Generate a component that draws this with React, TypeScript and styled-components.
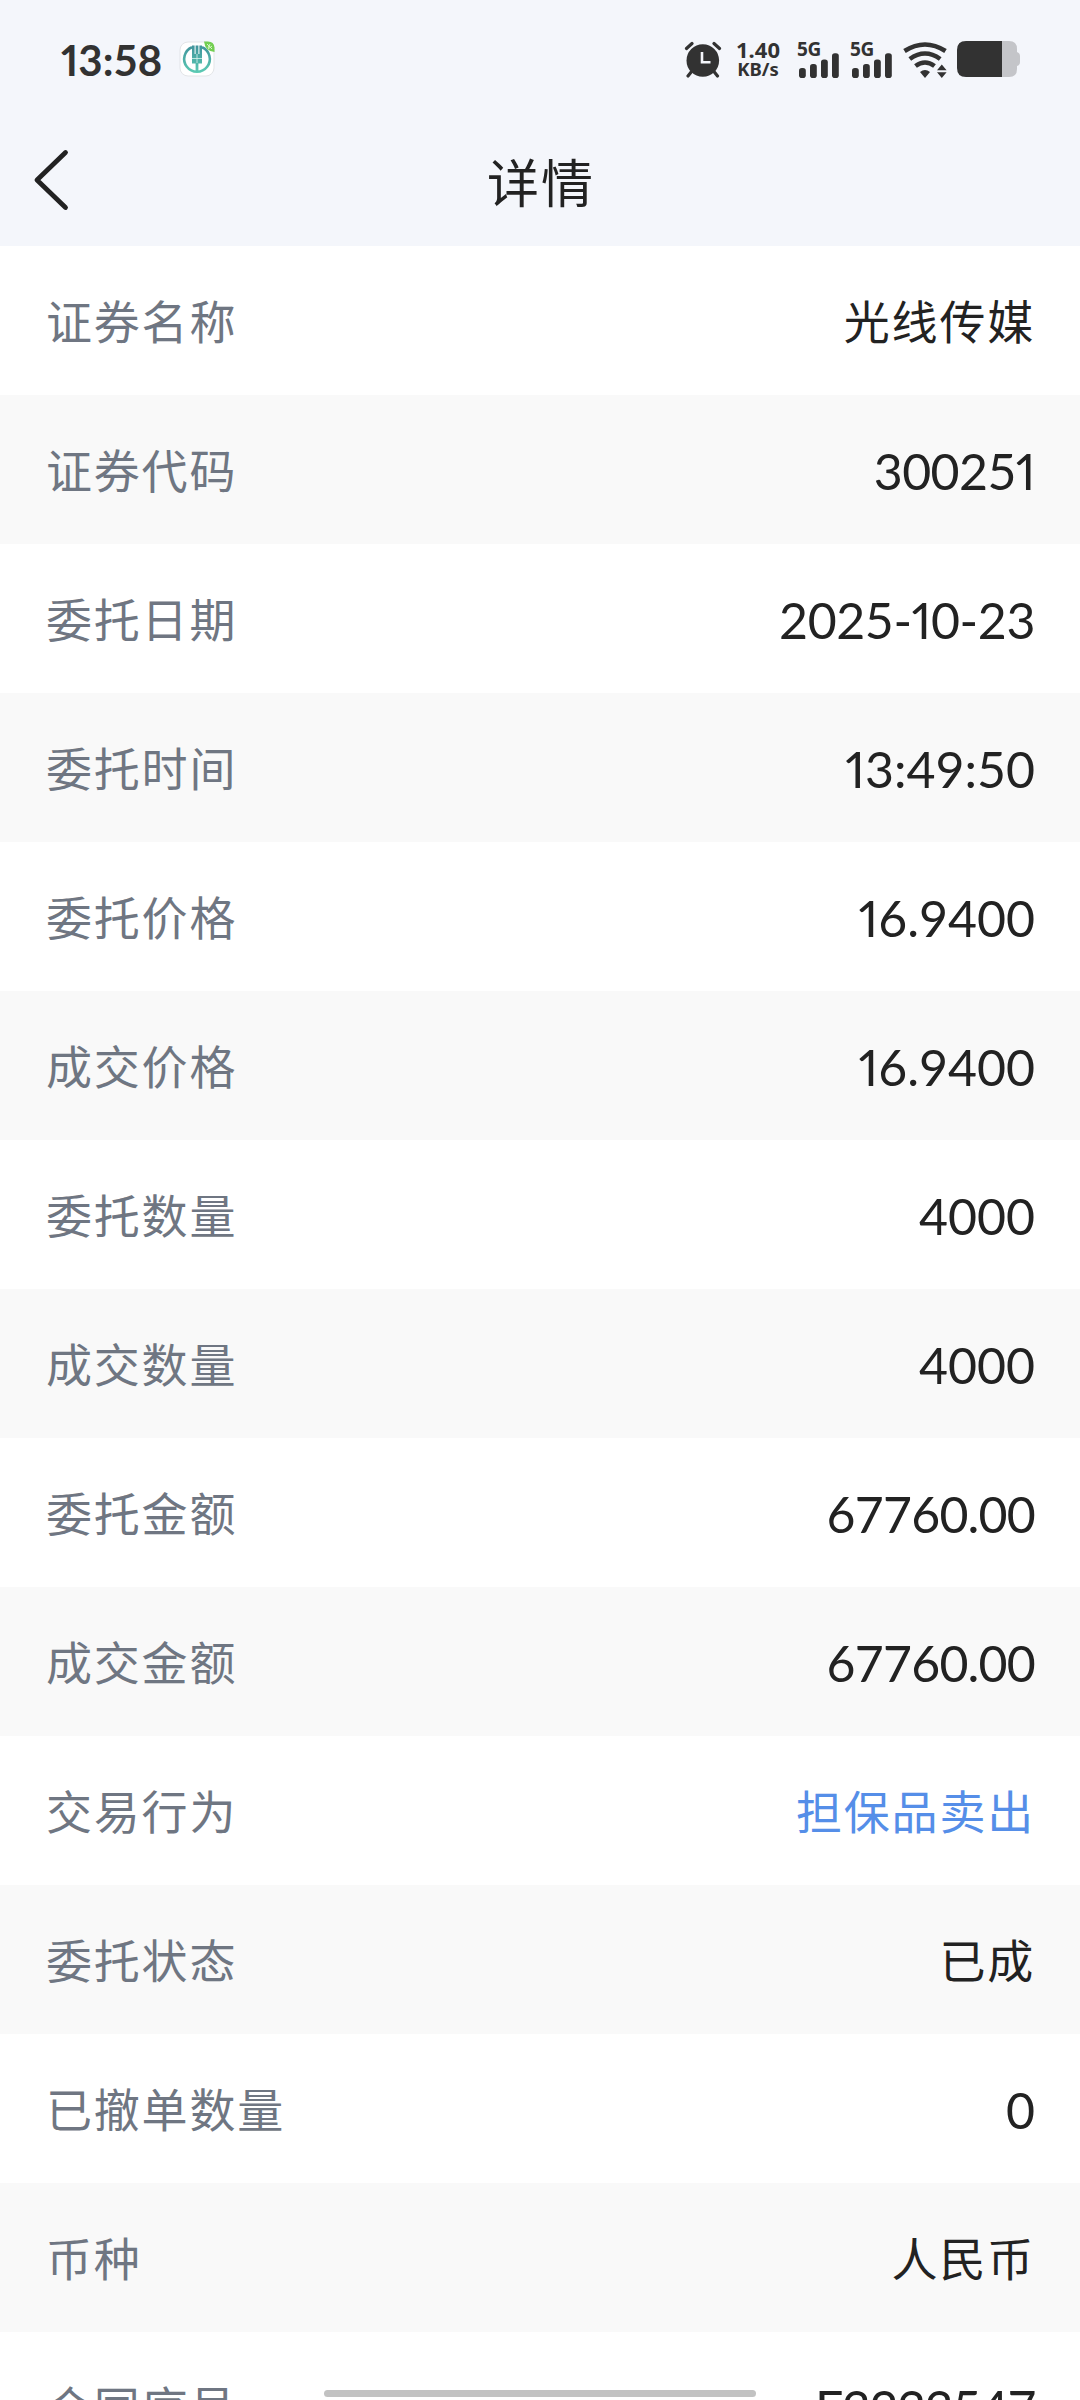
import React from "react";
import styled, { createGlobalStyle } from "styled-components";

const Global = createGlobalStyle`
  * { box-sizing: border-box; }
  body { margin: 0; background: #fff; }
`;

const Screen = styled.main`
  position: relative;
  width: 1080px;
  height: 2400px;
  overflow: hidden;
  background: #fff;
  color: #222;
  font-family: Lato, "Noto Sans CJK SC", sans-serif;
`;

const Top = styled.header`
  height: 246px;
  background: #f4f6fb;
`;

const StatusBar = styled.div`
  display: flex;
  align-items: center;
  justify-content: space-between;
  height: 118px;
  padding: 0 60px 0 61px;
  color: #323232;
`;

const Group = styled.div`
  display: flex;
  align-items: center;
`;

const Clock = styled.span`
  width: 118px;
  padding-top: 2px;
  font-size: 42px;
  font-weight: 700;
  line-height: 50px;
  letter-spacing: 0;
  white-space: nowrap;
`;

const Speed = styled.div`
  width: 46px;
  margin: 0 16px 0 13px;
  font-family: "Noto Sans", sans-serif;
  font-weight: 700;
  text-align: center;
  white-space: nowrap;
`;

const SpeedValue = styled.div`
  font-size: 22px;
  line-height: 20px;
`;

const SpeedUnit = styled.div`
  font-size: 18.5px;
  line-height: 20px;
`;

const Signal = styled.div`
  position: relative;
  width: 44px;
  height: 38px;
  margin-right: 9px;
`;

const Network = styled.span`
  position: absolute;
  left: 0;
  top: -2px;
  font: 700 19px/22px "Noto Sans", sans-serif;
  letter-spacing: -0.4px;
`;

const WifiSlot = styled.div`
  display: flex;
  margin-right: 8px;
`;

const NavBar = styled.nav`
  display: grid;
  grid-template-columns: 120px 1fr 120px;
  align-items: center;
  height: 128px;
`;

const Back = styled.button`
  display: flex;
  width: 120px;
  padding: 0 0 5px 32px;
  border: 0;
  background: none;
`;

const Title = styled.h1`
  margin: 0;
  padding: 1px 0 0 2px;
  font-size: 52px;
  font-weight: 400;
  line-height: 70px;
  letter-spacing: 2px;
  text-align: center;
`;

const List = styled.dl`
  margin: 0;
`;

const Row = styled.div`
  display: flex;
  align-items: center;
  justify-content: space-between;
  height: 149px;
  padding: 2px 45px 0 46px;
  &:nth-child(even) { background: #f9f9f9; }
`;

const Label = styled.dt`
  color: #6f7682;
  font-size: 46px;
  line-height: 66px;
  letter-spacing: 1.8px;
`;

const Value = styled.dd<{ $digits?: boolean; $link?: boolean; $track?: number }>`
  margin: 0;
  color: ${(p) => (p.$link ? "#558ee8" : "#222")};
  font-size: ${(p) => (p.$digits ? 50 : 46)}px;
  line-height: 66px;
  letter-spacing: ${(p) => p.$track ?? 1.8}px;
`;

const NarrowOne = styled.span`
  font-feature-settings: "pnum";
`;

const HomeBar = styled.div`
  position: absolute;
  left: 324px;
  top: 2390px;
  width: 432px;
  height: 7px;
  border-radius: 4px;
  background: #c2c2c2;
`;

type Item = { label: string; value: string; digits?: boolean; link?: boolean; track?: number };

const items: Item[] = [
  { label: "证券名称", value: "光线传媒" },
  { label: "证券代码", value: "300251", digits: true, track: -0.6 },
  { label: "委托日期", value: "2025-10-23", digits: true, track: -0.4 },
  { label: "委托时间", value: "13:49:50", digits: true, track: 0 },
  { label: "委托价格", value: "16.9400", digits: true, track: 0 },
  { label: "成交价格", value: "16.9400", digits: true, track: 0 },
  { label: "委托数量", value: "4000", digits: true, track: 0 },
  { label: "成交数量", value: "4000", digits: true, track: 0 },
  { label: "委托金额", value: "67760.00", digits: true, track: -0.8 },
  { label: "成交金额", value: "67760.00", digits: true, track: -0.8 },
  { label: "交易行为", value: "担保品卖出", link: true },
  { label: "委托状态", value: "已成" },
  { label: "已撤单数量", value: "0", digits: true, track: 0 },
  { label: "币种", value: "人民币" },
  { label: "合同序号", value: "F3233547", digits: true, track: -1.4 },
];

// The figure 1 is set proportionally; the other figures keep their tabular width.
const Figures = ({ text }: { text: string }) => (
  <>
    {text.split(/(1)/).map((part, i) => (part === "1" ? <NarrowOne key={i}>1</NarrowOne> : part))}
  </>
);

const BankLogo = () => (
  <svg width="36" height="36" viewBox="0 0 36 36">
    <defs>
      <linearGradient id="teal" gradientUnits="userSpaceOnUse" x1="0" y1="4" x2="0" y2="32">
        <stop offset="0" stopColor="#3f929b" />
        <stop offset="1" stopColor="#5ccbb4" />
      </linearGradient>
    </defs>
    <rect x="1" y="1" width="34" height="34" rx="8" fill="#fff" stroke="#e3e5e8" />
    <path d="M13 6.200A12.800 12.800 0 1 0 23 6.200" fill="none" stroke="url(#teal)" strokeWidth="2.600" />
    <path d="M13 4.500h2.600v8.500h1V4.500h2.800v8.500h1V4.500H23v18h-3.600v8h-2.800v-8H13z" fill="url(#teal)" />
    <path d="M13 17.500h10M18 13v9" stroke="#d9f3ee" strokeWidth=".8" />
    <path d="M25 .5h4q6 0 6.500 6v4.500Q26 10 25 .5z" fill="#72ce52" />
    <path d="M28 3l5 5M31 3l-2 4M33 5l-4 3" stroke="#d8f5c5" strokeWidth="1" />
  </svg>
);

const AlarmIcon = () => (
  <svg width="38" height="38" viewBox="0 0 38 38">
    <g fill="none" stroke="#323232" strokeWidth="3.200" strokeLinecap="round">
      <path d="M2.500 8.500L8 3.500M30 3.500L35.500 8.500M8 31l-4 5M29.500 31l4 5" />
    </g>
    <circle cx="18.800" cy="20.500" r="16.300" fill="#323232" />
    <path d="M18 12v10.300h8.500" fill="none" stroke="#f4f6fb" strokeWidth="2.600" />
  </svg>
);

const Bars = () => (
  <svg width="44" height="38" viewBox="0 0 44 38" fill="#323232">
    <rect x="2" y="28" width="6.800" height="10" rx="2.800" />
    <rect x="13" y="24" width="6.800" height="14" rx="2.800" />
    <rect x="24" y="19.500" width="6.800" height="18.500" rx="2.800" />
    <rect x="35" y="13.300" width="6.800" height="24.700" rx="2.800" />
  </svg>
);

const WifiIcon = () => (
  <svg width="46" height="38" viewBox="0 0 46 38">
    <g fill="none" stroke="#323232" strokeWidth="4.600">
      <path d="M1.500 11Q22 -2 42.500 11" />
      <path d="M6.800 19Q22 8 37.200 19" />
      <path d="M12.500 26Q22 19 31.500 26" />
    </g>
    <path d="M17 32q5-4 10 0l-5 6zM34 30.200l4.800-5.700 4.800 5.700zM34 32.300h9.600l-4.800 5.700z" fill="#323232" />
  </svg>
);

const BatteryIcon = () => (
  <svg width="63" height="36" viewBox="0 0 63 36">
    <path d="M45 0h7q8 0 8 8v3q3 1 3 4v6q0 3-3 4v3q0 8-8 8h-7z" fill="#c4c5c9" />
    <path d="M9 0h36v36H9q-9 0-9-9V9q0-9 9-9z" fill="#323232" />
  </svg>
);

export default function App() {
  return (
    <Screen>
      <Global />
      <Top>
        <StatusBar>
          <Group>
            <Clock><Figures text="13:58" /></Clock>
            <BankLogo />
          </Group>
          <Group>
            <AlarmIcon />
            <Speed>
              <SpeedValue>1.40</SpeedValue>
              <SpeedUnit>KB/s</SpeedUnit>
            </Speed>
            <Signal><Network>5G</Network><Bars /></Signal>
            <Signal><Network>5G</Network><Bars /></Signal>
            <WifiSlot><WifiIcon /></WifiSlot>
            <BatteryIcon />
          </Group>
        </StatusBar>
        <NavBar>
          <Back aria-label="返回">
            <svg width="38" height="62" viewBox="0 0 38 62">
              <path d="M33.500 3.500L5 31l28.500 27.500" fill="none" stroke="#222" strokeWidth="4.800" strokeLinecap="round" strokeLinejoin="round" />
            </svg>
          </Back>
          <Title>详情</Title>
        </NavBar>
      </Top>
      <List>
        {items.map((it) => (
          <Row key={it.label}>
            <Label>{it.label}</Label>
            <Value $digits={it.digits} $link={it.link} $track={it.track}>
              <Figures text={it.value} />
            </Value>
          </Row>
        ))}
      </List>
      <HomeBar />
    </Screen>
  );
}
